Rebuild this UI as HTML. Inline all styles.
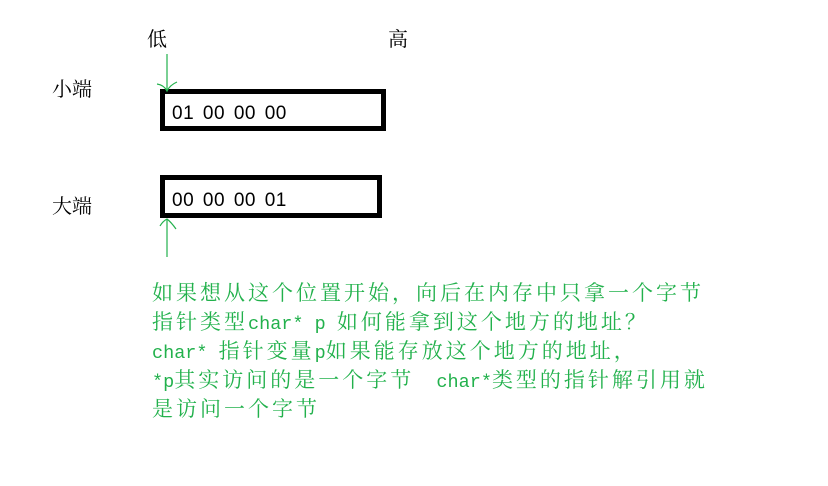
<!DOCTYPE html>
<html><head><meta charset="utf-8"><style>
body{margin:0;width:828px;height:486px;background:#fff;position:relative;overflow:hidden;font-family:"Liberation Serif","Noto Serif CJK SC",serif;}
.a{position:absolute;white-space:nowrap;}
.lbl{font-size:20px;color:#000;line-height:20px;}
.box{position:absolute;border:5px solid #000;box-sizing:border-box;}
.num{position:absolute;font-family:"Liberation Sans",sans-serif;font-size:19px;color:#000;letter-spacing:0.5px;word-spacing:3px;line-height:20px;}
.g{position:absolute;left:152px;color:#22b14c;font-family:"Noto Serif CJK SC","Noto Sans CJK SC",serif;font-size:21px;letter-spacing:3px;line-height:22px;height:22px;white-space:pre;}
.g span{font-family:"Liberation Mono",monospace;font-size:18.5px;letter-spacing:0;}
</style></head><body>
<div class="a lbl" style="left:147px;top:30px">低</div>
<div class="a lbl" style="left:388px;top:30px">高</div>
<div class="a lbl" style="left:52px;top:80px">小端</div>
<div class="a lbl" style="left:52px;top:197px">大端</div>
<div class="box" style="left:160px;top:89px;width:226px;height:42px"></div>
<div class="box" style="left:160px;top:175px;width:222px;height:43px"></div>
<div class="num" style="left:172px;top:104px">01 00 00 00</div>
<div class="num" style="left:172px;top:191px">00 00 00 01</div>
<svg class="a" style="left:0;top:0" width="828" height="486">
<g stroke="#22b14c" stroke-width="1.2" fill="none">
<path d="M167 54 V91"/><path d="M157 84 Q164 85 167 91 Q170 85 177 82"/>
<path d="M167 219 V257"/><path d="M160 226 Q163 221 167 219 Q171 222 176 229"/>
</g></svg>
<div class="g" style="top:281px">如果想从这个位置开始，向后在内存中只拿一个字节</div>
<div class="g" style="top:310px">指针类型<span>char* p </span>如何能拿到这个地方的地址？</div>
<div class="g" style="top:339px"><span>char* </span>指针变量<span>p</span>如果能存放这个地方的地址，</div>
<div class="g" style="top:368px"><span>*p</span>其实访问的是一个字节<span>  char*</span>类型的指针解引用就</div>
<div class="g" style="top:397px">是访问一个字节</div>
</body></html>
